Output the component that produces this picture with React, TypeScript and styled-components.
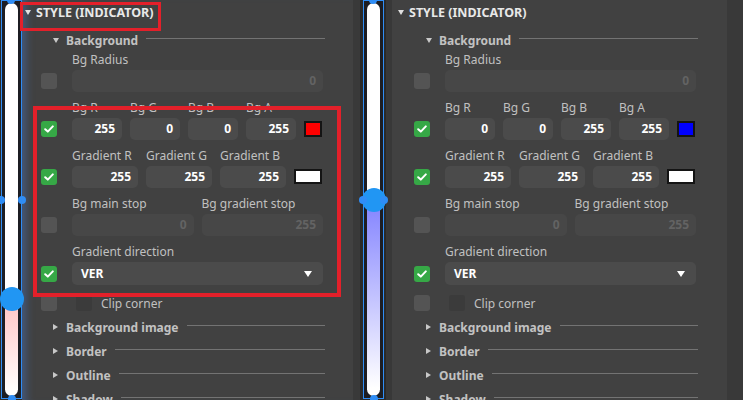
import React from 'react';
import styled, { createGlobalStyle, css } from 'styled-components';

const Global = createGlobalStyle`
  html, body { margin: 0; padding: 0; background: #2b2b2b; }
  body { font-family: "Noto Sans", "Open Sans", sans-serif; }
  * { box-sizing: border-box; }
`;

const Stage = styled.div`
  position: relative;
  display: flex;
  width: 743px;
  height: 400px;
  overflow: hidden;
  background: #2b2b2b;
`;

const Half = styled.div<{ $w: number }>`
  display: flex;
  flex: none;
  width: ${p => p.$w}px;
  height: 400px;
`;

/* ---------- slider preview ---------- */
const SliderWrap = styled.div<{ $pl: number }>`
  flex: none;
  width: ${p => 21 + p.$pl}px;
  padding-left: ${p => p.$pl}px;
  height: 400px;
`;

const Selection = styled.div`
  position: relative;
  display: flex;
  width: 21px;
  height: 399px;
  border: 1px solid #2f8df5;
  background: #1c1d23;
  padding: 2px 2px 2px 2px;
`;

const Track = styled.div`
  flex: 1;
  display: flex;
  flex-direction: column;
  margin: 0 1px;
  border-radius: 8px;
  overflow: hidden;
`;

const TrackTop = styled.div`
  flex: none;
  background: #ffffff;
`;

const TrackFill = styled.div<{ $from: string }>`
  flex: 1;
  background: linear-gradient(${p => p.$from}, #ffffff 96%);
`;

const Knob = styled.div`
  position: absolute;
  left: 50%;
  width: 24px;
  height: 24px;
  margin-left: -12px;
  margin-top: -12px;
  border-radius: 50%;
  background: #2196f3;
`;

const Handle = styled.span<{ $pos: 'top' | 'bottom' | 'left' | 'right' }>`
  position: absolute;
  width: 8px;
  height: 8px;
  border-radius: 50%;
  background: #2f8df5;
  ${p =>
    p.$pos === 'top'
      ? css`top: -5px; left: 50%; margin-left: -5px;`
      : p.$pos === 'bottom'
      ? css`bottom: -5px; left: 50%; margin-left: -4px;`
      : p.$pos === 'left'
      ? css`left: -5px; top: 50%; margin-top: -4px;`
      : css`right: -5px; top: 50%; margin-top: -4px;`}
`;

const Strip = styled.div<{ $w: number; $bg: string }>`
  flex: none;
  width: ${p => p.$w}px;
  height: 400px;
  background: ${p => p.$bg};
`;

/* ---------- property panel ---------- */
const Panel = styled.div<{ $w: number; $pl: number; $glow?: boolean }>`
  flex: none;
  width: ${p => p.$w}px;
  height: 400px;
  padding-left: ${p => p.$pl}px;
  background: #414141;
  overflow: hidden;
  ${p =>
    p.$glow &&
    css`
      box-shadow: inset 11px 0 9px -7px rgba(70, 120, 200, 0.45);
    `}
`;

const Content = styled.div`
  width: 300px;
  display: flex;
  flex-direction: column;
`;

const Header = styled.div`
  height: 24px;
  display: flex;
  align-items: center;
  color: #e8e8e8;
  font-weight: 700;
  font-size: 12.5px;
  white-space: nowrap;
`;

const Caret = styled.span<{ $dir: 'down' | 'right'; $color: string }>`
  flex: none;
  width: 0;
  height: 0;
  ${p =>
    p.$dir === 'down'
      ? css`
          border-left: 3px solid transparent;
          border-right: 3px solid transparent;
          border-top: 5px solid ${p.$color};
        `
      : css`
          border-top: 3px solid transparent;
          border-bottom: 3px solid transparent;
          border-left: 5px solid ${p.$color};
        `}
`;

const CaretSlot = styled.span<{ $w: number }>`
  flex: none;
  width: ${p => p.$w}px;
  display: flex;
  align-items: center;
`;

const SubHeader = styled.div<{ $h: number; $mt?: number }>`
  height: ${p => p.$h}px;
  margin-top: ${p => p.$mt ?? 0}px;
  display: flex;
  align-items: center;
  padding-left: 28px;
  color: #c2c2c2;
  font-weight: 700;
  font-size: 12px;
  white-space: nowrap;
`;

const Rule = styled.span`
  flex: 1;
  height: 1px;
  margin-left: 8px;
  margin-top: -3px;
  background: #737373;
`;

const FieldRow = styled.div<{ $mt?: number }>`
  display: flex;
  align-items: flex-end;
  padding-left: 16px;
  margin-top: ${p => p.$mt ?? 0}px;
`;

const Check = styled.span<{ $on?: boolean; $mb?: number }>`
  flex: none;
  width: 16px;
  height: 16px;
  margin-bottom: ${p => p.$mb ?? 3}px;
  border-radius: 3px;
  background: ${p => (p.$on ? '#36a846' : '#545454')};
  display: flex;
  align-items: center;
  justify-content: center;
`;

const Fields = styled.div`
  width: 251px;
  margin-left: 15px;
  display: flex;
  align-items: flex-end;
  gap: 8px;
`;

const Field = styled.div<{ $w: number }>`
  flex: none;
  width: ${p => p.$w}px;
  display: flex;
  flex-direction: column;
`;

const Label = styled.div`
  height: 19px;
  line-height: 19px;
  margin-bottom: 1px;
  font-size: 12px;
  color: #c0c0c0;
  white-space: nowrap;
`;

const NumBox = styled.div<{ $off?: boolean }>`
  height: 22px;
  line-height: 22px;
  border-radius: 5px;
  padding-right: 7px;
  text-align: right;
  font-size: 12px;
  font-weight: 700;
  background: ${p => (p.$off ? '#474747' : '#4b4b4b')};
  color: ${p => (p.$off ? '#636363' : '#ffffff')};
`;

const Swatch = styled.span<{ $w: number; $h: number; $c: string; $mb: number }>`
  flex: none;
  width: ${p => p.$w}px;
  height: ${p => p.$h}px;
  margin-bottom: ${p => p.$mb}px;
  border: 2px solid #141414;
  background: ${p => p.$c};
`;

const SelectBox = styled.div`
  height: 23px;
  border-radius: 5px;
  background: #4b4b4b;
  padding: 0 11px 0 9px;
  display: flex;
  align-items: center;
  justify-content: space-between;
  color: #ffffff;
  font-weight: 700;
  font-size: 12px;
`;

const SelectArrow = styled.span`
  width: 0;
  height: 0;
  border-left: 4px solid transparent;
  border-right: 4px solid transparent;
  border-top: 6px solid #ffffff;
`;

const ClipRow = styled.div`
  height: 24px;
  margin-top: 6px;
  display: flex;
  align-items: center;
  padding-left: 16px;
  font-size: 12px;
  color: #c0c0c0;
`;

const GhostBox = styled.span`
  flex: none;
  width: 16px;
  height: 16px;
  margin-left: 19px;
  margin-right: 9px;
  border-radius: 3px;
  background: #3b3b3b;
`;

const Highlight = styled.div<{ $x: number; $y: number; $w: number; $h: number; $b: number }>`
  position: absolute;
  left: ${p => p.$x}px;
  top: ${p => p.$y}px;
  width: ${p => p.$w}px;
  height: ${p => p.$h}px;
  border: ${p => p.$b}px solid #e3202a;
  pointer-events: none;
`;

const Tick = () => (
  <svg width="10" height="8" viewBox="0 0 10 8">
    <polyline points="1.2,4.2 3.8,6.6 8.8,1.4" fill="none" stroke="#ffffff" strokeWidth="2" strokeLinecap="round" strokeLinejoin="round" />
  </svg>
);

type SliderProps = { knobY: number; fill: string; pl: number };

const Slider = ({ knobY, fill, pl }: SliderProps) => (
  <SliderWrap $pl={pl}>
    <Selection>
      <Track>
        <TrackTop style={{ height: knobY - 3 }} />
        <TrackFill $from={fill} />
      </Track>
      <Knob style={{ top: knobY - 1 }} />
      <Handle $pos="top" />
      <Handle $pos="bottom" />
      <Handle $pos="left" />
      <Handle $pos="right" />
    </Selection>
  </SliderWrap>
);

type PanelData = {
  bg: [string, string, string, string];
  bgColor: string;
  grad: [string, string, string];
  gradColor: string;
};

const SubSection = ({ title, mt }: { title: string; mt?: number }) => (
  <SubHeader $h={24} $mt={mt}>
    <CaretSlot $w={13}>
      <Caret $dir="right" $color="#c8c8c8" />
    </CaretSlot>
    {title}
    <Rule />
  </SubHeader>
);

const PropertyPanel = ({ d }: { d: PanelData }) => (
  <Content>
    <Header>
      <CaretSlot $w={11}>
        <Caret $dir="down" $color="#e0e0e0" />
      </CaretSlot>
      STYLE (INDICATOR)
    </Header>

    <SubHeader $h={20} $mt={6}>
      <CaretSlot $w={13}>
        <Caret $dir="down" $color="#c8c8c8" />
      </CaretSlot>
      Background
      <Rule />
    </SubHeader>

    <FieldRow>
      <Check />
      <Fields>
        <Field $w={251}>
          <Label>Bg Radius</Label>
          <NumBox $off>0</NumBox>
        </Field>
      </Fields>
    </FieldRow>

    <FieldRow $mt={6}>
      <Check $on>
        <Tick />
      </Check>
      <Fields>
        {['Bg R', 'Bg G', 'Bg B', 'Bg A'].map((l, i) => (
          <Field $w={50} key={l}>
            <Label>{l}</Label>
            <NumBox>{d.bg[i]}</NumBox>
          </Field>
        ))}
        <Swatch $w={18} $h={16} $c={d.bgColor} $mb={3} />
      </Fields>
    </FieldRow>

    <FieldRow $mt={6}>
      <Check $on>
        <Tick />
      </Check>
      <Fields>
        {['Gradient R', 'Gradient G', 'Gradient B'].map((l, i) => (
          <Field $w={66} key={l}>
            <Label>{l}</Label>
            <NumBox>{d.grad[i]}</NumBox>
          </Field>
        ))}
        <Swatch $w={28} $h={15} $c={d.gradColor} $mb={4} />
      </Fields>
    </FieldRow>

    <FieldRow $mt={6}>
      <Check />
      <Fields>
        <Field $w={121.5}>
          <Label>Bg main stop</Label>
          <NumBox $off>0</NumBox>
        </Field>
        <Field $w={121.5}>
          <Label>Bg gradient stop</Label>
          <NumBox $off>255</NumBox>
        </Field>
      </Fields>
    </FieldRow>

    <FieldRow $mt={6}>
      <Check $on $mb={3.5}>
        <Tick />
      </Check>
      <Fields>
        <Field $w={251}>
          <Label>Gradient direction</Label>
          <SelectBox>
            VER
            <SelectArrow />
          </SelectBox>
        </Field>
      </Fields>
    </FieldRow>

    <ClipRow>
      <Check $mb={0} />
      <GhostBox />
      Clip corner
    </ClipRow>

    <SubSection title="Background image" />
    <SubSection title="Border" />
    <SubSection title="Outline" />
    <SubSection title="Shadow" />
  </Content>
);

const leftData: PanelData = {
  bg: ['255', '0', '0', '255'],
  bgColor: '#ff0000',
  grad: ['255', '255', '255'],
  gradColor: '#ffffff',
};

const rightData: PanelData = {
  bg: ['0', '0', '255', '255'],
  bgColor: '#0000ff',
  grad: ['255', '255', '255'],
  gradColor: '#ffffff',
};

export default function App() {
  return (
    <Stage>
      <Global />
      <Half $w={363}>
        <Slider knobY={299} fill="#ffc3c3" pl={1} />
        <Panel $w={331} $pl={3} $glow>
          <PropertyPanel d={leftData} />
        </Panel>
        <Strip $w={9} $bg="linear-gradient(to right, #393939 80%, #2a2a2a 80%)" />
      </Half>
      <Half $w={380}>
        <Slider knobY={200} fill="#8282ff" pl={0} />
        <Strip $w={8} $bg="linear-gradient(to right, #2a2a2a 30%, #383838 30%)" />
        <Panel $w={335} $pl={6}>
          <PropertyPanel d={rightData} />
        </Panel>
        <Strip $w={16} $bg="#393939" />
      </Half>
      <Highlight $x={20} $y={2} $w={141} $h={29} $b={3} />
      <Highlight $x={33} $y={106} $w={308} $h={191} $b={4} />
    </Stage>
  );
}
